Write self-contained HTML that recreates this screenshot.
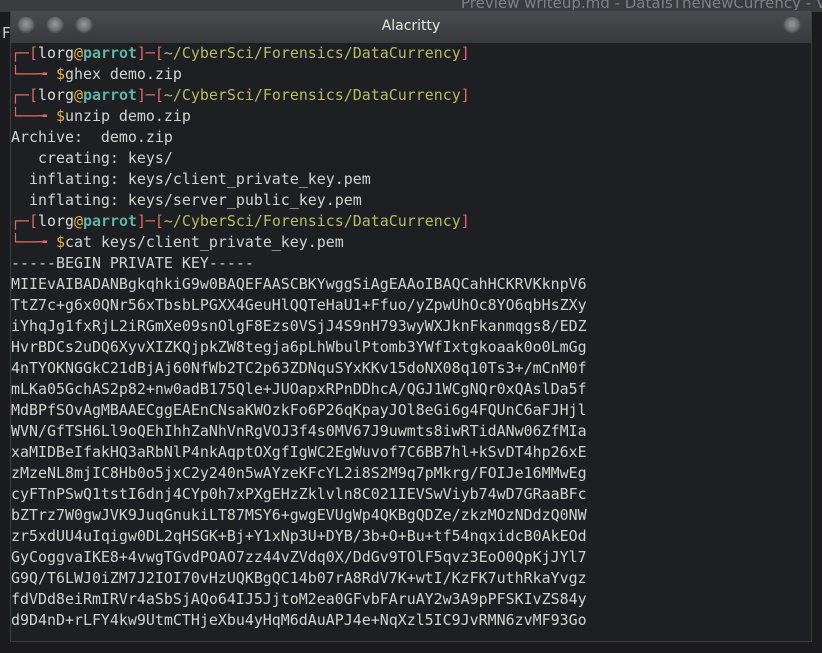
<!DOCTYPE html>
<html><head><meta charset="utf-8"><style>
html,body{margin:0;padding:0;width:822px;height:653px;overflow:hidden;background:#1b1b1d;}
.topbar{position:absolute;left:0;top:0;width:822px;height:12px;background:#3a3b3e;overflow:hidden;}
.toptxt{position:absolute;left:461px;top:-6px;font:15px "DejaVu Sans",sans-serif;color:#7f8086;white-space:nowrap;}
.win{position:absolute;left:10px;top:10px;width:802px;height:632px;background:#1e1f22;border:1px solid #3c3d40;box-sizing:border-box;}
.title{position:absolute;left:0;top:0;width:100%;height:32px;background:linear-gradient(#4a4b4e,#38393c);}
.title span{position:absolute;left:0;right:0;top:7px;text-align:center;font:14px "DejaVu Sans",sans-serif;color:#e8e8e8;}
.btn{position:absolute;top:6px;width:18px;height:18px;border-radius:50%;background:radial-gradient(circle at 50% 40%,#9a9a9c 0,#6d6d70 45%,#3a3a3c 70%,#5a5a5d 100%);}
pre{position:absolute;left:0;top:32px;margin:0;font:14.95px/21px "DejaVu Sans Mono","Liberation Mono",monospace;color:#d2d2d2;white-space:pre;}
.r{color:#dd6a63}.y{color:#e2b144}.t{color:#5db3a6;font-weight:bold}.g{color:#b9ba62}.w{color:#dcdcdc}
.side{position:absolute;left:0;top:12px;width:10px;height:641px;background:#1c1c1e;}
.left{position:absolute;left:2px;top:24px;font:15px "DejaVu Sans",sans-serif;color:#ccc;width:8px;overflow:hidden;}
</style></head><body>
<div class="topbar"><div class="toptxt">Preview writeup.md - DataIsTheNewCurrency - Visual S</div></div>
<div class="side"></div>
<div class="left">F</div>
<div class="win">
<div class="title"><span>Alacritty</span>
<div class="btn" style="left:6px"></div><div class="btn" style="left:35px"></div><div class="btn" style="left:64px"></div><div class="btn" style="left:772px"></div></div>
<pre><span class="r">┌─[</span><span class="w">lorg</span><span class="y">@</span><span class="t">parrot</span><span class="r">]─[</span><span class="g">~/CyberSci/Forensics/DataCurrency</span><span class="r">]</span>
<span class="r">└──╼ </span><span class="y">$</span>ghex demo.zip
<span class="r">┌─[</span><span class="w">lorg</span><span class="y">@</span><span class="t">parrot</span><span class="r">]─[</span><span class="g">~/CyberSci/Forensics/DataCurrency</span><span class="r">]</span>
<span class="r">└──╼ </span><span class="y">$</span>unzip demo.zip
Archive:  demo.zip
   creating: keys/
  inflating: keys/client_private_key.pem
  inflating: keys/server_public_key.pem
<span class="r">┌─[</span><span class="w">lorg</span><span class="y">@</span><span class="t">parrot</span><span class="r">]─[</span><span class="g">~/CyberSci/Forensics/DataCurrency</span><span class="r">]</span>
<span class="r">└──╼ </span><span class="y">$</span>cat keys/client_private_key.pem
-----BEGIN PRIVATE KEY-----
MIIEvAIBADANBgkqhkiG9w0BAQEFAASCBKYwggSiAgEAAoIBAQCahHCKRVKknpV6
TtZ7c+g6x0QNr56xTbsbLPGXX4GeuHlQQTeHaU1+Ffuo/yZpwUhOc8YO6qbHsZXy
iYhqJg1fxRjL2iRGmXe09snOlgF8Ezs0VSjJ4S9nH793wyWXJknFkanmqgs8/EDZ
HvrBDCs2uDQ6XyvXIZKQjpkZW8tegja6pLhWbulPtomb3YWfIxtgkoaak0o0LmGg
4nTYOKNGGkC21dBjAj60NfWb2TC2p63ZDNquSYxKKv15doNX08q10Ts3+/mCnM0f
mLKa05GchAS2p82+nw0adB175Qle+JUOapxRPnDDhcA/QGJ1WCgNQr0xQAslDa5f
MdBPfSOvAgMBAAECggEAEnCNsaKWOzkFo6P26qKpayJOl8eGi6g4FQUnC6aFJHjl
WVN/GfTSH6Ll9oQEhIhhZaNhVnRgVOJ3f4s0MV67J9uwmts8iwRTidANw06ZfMIa
xaMIDBeIfakHQ3aRbNlP4nkAqptOXgfIgWC2EgWuvof7C6BB7hl+kSvDT4hp26xE
zMzeNL8mjIC8Hb0o5jxC2y240n5wAYzeKFcYL2i8S2M9q7pMkrg/FOIJe16MMwEg
cyFTnPSwQ1tstI6dnj4CYp0h7xPXgEHzZklvln8C021IEVSwViyb74wD7GRaaBFc
bZTrz7W0gwJVK9JuqGnukiLT87MSY6+gwgEVUgWp4QKBgQDZe/zkzMOzNDdzQ0NW
zr5xdUU4uIqigw0DL2qHSGK+Bj+Y1xNp3U+DYB/3b+O+Bu+tf54nqxidcB0AkEOd
GyCoggvaIKE8+4vwgTGvdPOAO7zz44vZVdq0X/DdGv9TOlF5qvz3EoO0QpKjJYl7
G9Q/T6LWJ0iZM7J2IOI70vHzUQKBgQC14b07rA8RdV7K+wtI/KzFK7uthRkaYvgz
fdVDd8eiRmIRVr4aSbSjAQo64IJ5JjtoM2ea0GFvbFAruAY2w3A9pPFSKIvZS84y
d9D4nD+rLFY4kw9UtmCTHjeXbu4yHqM6dAuAPJ4e+NqXzl5IC9JvRMN6zvMF93Go</pre>
</div>
</body></html>
